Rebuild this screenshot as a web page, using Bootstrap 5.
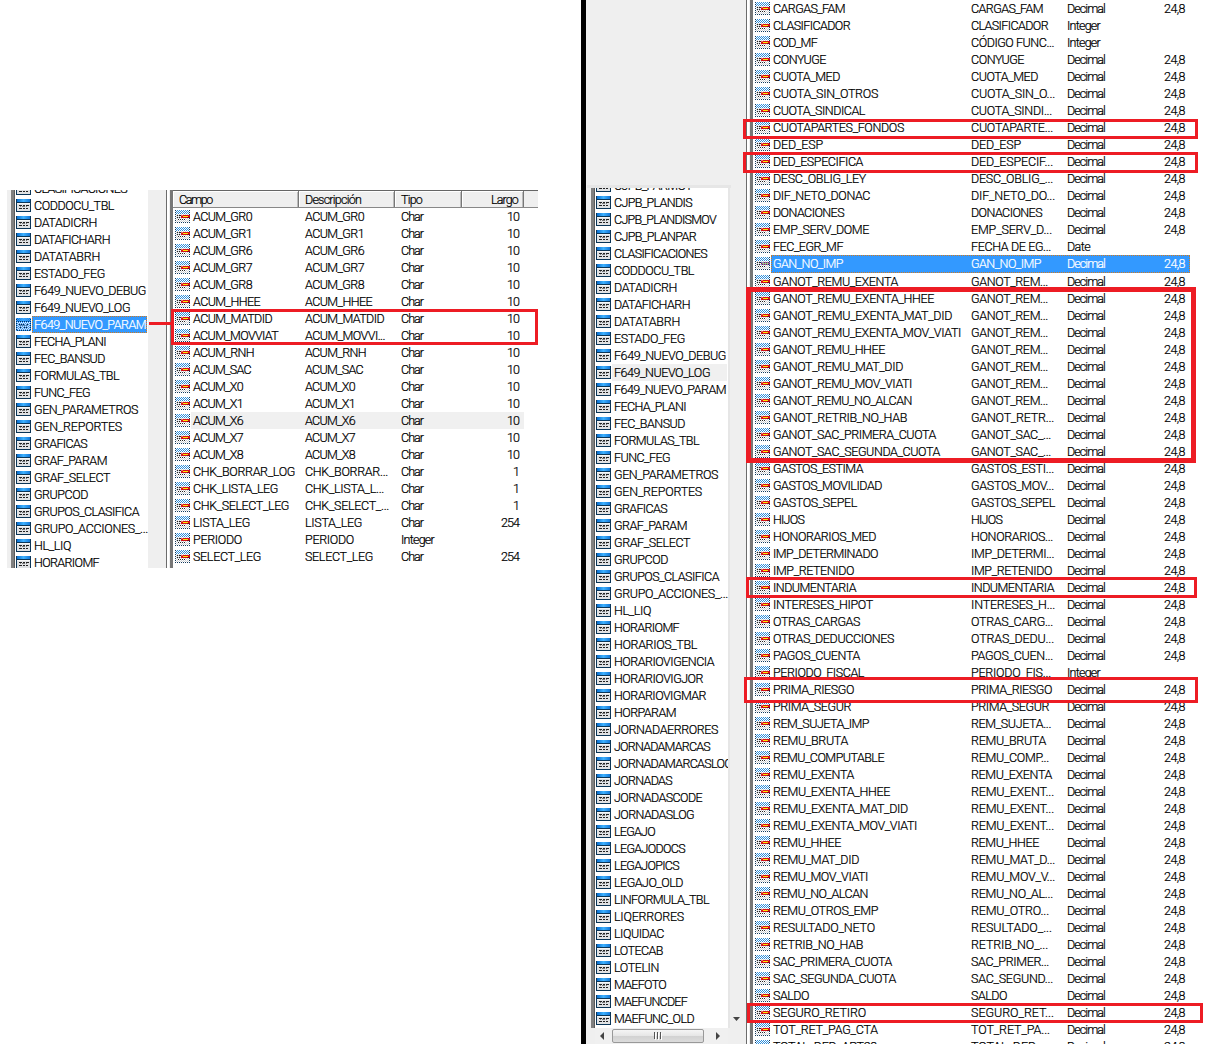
<!DOCTYPE html>
<html lang="es">
<head>
<meta charset="utf-8">
<meta name="viewport" content="width=device-width, initial-scale=1">
<title>Tablas y campos</title>
<link href="https://cdn.jsdelivr.net/npm/bootstrap@5.3.0/dist/css/bootstrap.min.css" rel="stylesheet">
<style>
body{width:1207px;height:1045px;overflow:hidden;background:#fff;color:#000;font-family:Roboto,"Liberation Sans",sans-serif;font-size:12.5px;font-weight:300;line-height:17px;-webkit-text-stroke:.22px currentColor}
.left-shot{width:531px;height:378px;margin:190px 43px 0 7px;background:#efefef}
.right-shot{height:1044px;border-left:5px solid #000;background:#efefef}
.edge{border-left:3px solid #808080;border-right:0;box-shadow:inset 1px 0 #5c5c5c}
.edge-in{border-left:3px solid #777;position:relative}
.tree{background:#fff}
.left-tree{margin-left:4px;width:137px}
.right-side{width:160px;padding-left:1px}
.tree-head{height:185px}
.tree-band{height:3px;width:144px;background:#e6e6e6}
.right-tree{margin-left:4px;width:137px;height:840px}
.up6{margin-top:-10px}
.up2{margin-top:-11px}
.gutter{width:18px}
.split-line{width:4px;border-left:1px solid #6b6b6b;background:linear-gradient(90deg,#fff 2px,#efefef 2px)}
.tree-row{height:17px;padding-left:2px}
.tree-row svg{width:15px;height:13px;margin-top:2px}
.tree-row .lbl{margin-left:1px;padding-left:2px;height:17px}
.tree-row .lbl.hot{background:#f0f0f0;width:115px}
.picked{background:#39f;color:#fff}
.tree-row .lbl.picked{width:115px;outline:1px dotted #d07a20;outline-offset:-1px}
.lbl,.f-desc,.f-type,.f-len{white-space:pre}
.field-list{background:#fff}
.f-row{height:17px;padding-left:2px}
.f-row svg{width:15px;height:13px;margin-top:2px}
.f-cells{margin-left:1px;padding-left:2px;height:17px}
.f-cells.hot{background:#f0f0f0}
.f-cells.picked{height:18px;outline:1px dotted #d07a20;outline-offset:-1px}
.f-row.tall{height:18px}
.narrow .f-cells{width:333px}
.wide .f-cells{width:419px}
.f-desc{width:96px}
.f-type{width:64px}
.f-len{width:54px;text-align:right}
.narrow .f-name{width:112px}
.wide .f-name{width:198px}
.narrow{width:368px;height:378px}
.wide{width:454px;height:1044px}
.col-head{height:18px;background:#efefef;border-top:1px solid #666;border-bottom:1px solid #888}
.col-head div{height:16px;padding:0 5px 0 6px;border-right:1px solid #777;box-shadow:inset 1px 1px #fff,inset -1px 0 #bbb;white-space:pre}
.frame{position:absolute;border:3px solid #ed1c24;pointer-events:none}
.frame.thick{border-width:5px}
.link-line{position:absolute;left:149px;top:322px;width:24px;height:3px;background:#ed1c24}
.hbar{height:16px;background:#f0f0f0;margin-left:8px;width:133px;position:relative}
.thumb{width:92px;height:14px;border:1px solid #999;border-radius:2px;background:linear-gradient(#f5f5f5,#e6e6e6 48%,#d2d2d2 52%,#dcdcdc)}
.vcol{width:15px;background:#efefef;border-left:2px solid #e6e6e6}
</style>
<script src="https://cdn.jsdelivr.net/npm/bootstrap@5.3.0/dist/js/bootstrap.bundle.min.js"></script>
</head>
<body class="d-flex align-items-start position-relative m-0">
<svg width="0" height="0" class="position-absolute">
  <defs>
    <linearGradient id="bar" x1="0" x2="1"><stop offset="0" stop-color="#0b6fd0"/><stop offset=".5" stop-color="#3db1ff"/><stop offset="1" stop-color="#1478d8"/></linearGradient>
    <symbol id="table" viewBox="0 0 15 13"><g shape-rendering="crispEdges">
      <path fill="#0a3557" d="M0 0h15v13H0z"/><path fill="url(#bar)" d="M1 0h13v3H1z"/><path fill="#e0e2e4" d="M1 4h13v8H1z"/><path fill="#f6f6f6" d="M1 4h13v1H1z"/>
      <path fill="#222" d="M3 6h3v1H3zM7 6h2v1H7zM10 6h3v1h-3zM3 9h3v1H3zM7 9h2v1H7zM10 9h2v1h-2z"/><path fill="#777" d="M4 7h1v1H4zM6 7h3v1H6zM10 7h1v1h-1z"/></g></symbol>
    <symbol id="field" viewBox="0 0 15 13"><g shape-rendering="crispEdges" fill="none">
      <path fill="#fff" d="M0 0h15v13H0z"/>
      <path stroke="#2f8fdc" stroke-dasharray="1 1" d="M0 .5h15M1 1.500h14M0 2.500h15M1 3.500h14"/>
      <path stroke="#cdd0d4" stroke-dasharray="1 1" d="M0 4.500h15M1 5.500h14M0 6.500h15M1 7.500h14M0 8.500h15M1 9.500h14M0 10.500h15M1 11.500h14"/>
      <path stroke="#12395c" stroke-dasharray="1 1" d="M.5 0v13M14.500 0v13M0 12.500h15"/>
      <path fill="#222" d="M2 5h1v1H2zM4 5h2v1H4zM2 7h1v1H2zM4 7h1v1H4zM3 9h1v1H3zM5 9h1v1H5zM7 9h1v1H7zM9 9h1v1H9z"/>
      <path fill="#d40f16" d="M6 5h9v3H6z"/><path fill="#f06a60" d="M6 5h2v1H6z"/><path fill="#8e0710" d="M12 7h3v1h-3z"/><path fill="#ffe800" d="M8 6h5v1H8z"/></g></symbol>
    <symbol id="table-on" viewBox="0 0 15 13"><use href="#table"/><path stroke="#39f" stroke-dasharray="1 1" shape-rendering="crispEdges" d="M0 .5h15M1 1.500h14M0 2.500h15M1 3.500h14M0 4.500h15M1 5.500h14M0 6.500h15M1 7.500h14M0 8.500h15M1 9.500h14M0 10.500h15M1 11.500h14M0 12.500h15"/></symbol>
    <symbol id="field-on" viewBox="0 0 15 13"><use href="#field"/><path stroke="#39f" stroke-dasharray="1 1" shape-rendering="crispEdges" d="M6 5.500h9M7 6.500h8M6 7.500h9"/></symbol>
  </defs>
</svg>

<section class="left-shot d-flex overflow-hidden flex-shrink-0">
  <div class="left-tree tree edge overflow-hidden flex-shrink-0"><div id="treeA" class="up6"></div></div>
  <div class="gutter flex-shrink-0"></div>
  <div class="split-line flex-shrink-0"></div>
  <div class="narrow field-list edge-in flex-shrink-0">
    <div class="col-head d-flex"><div style="width:126px">Campo</div><div style="width:96px">Descripción</div><div style="width:67px">Tipo</div><div class="text-end" style="width:62px">Largo</div></div>
    <div id="fieldsA"></div>
  </div>
</section>

<section class="right-shot d-flex overflow-hidden flex-grow-1">
  <div class="right-side flex-shrink-0">
    <div class="tree-head"></div><div class="tree-band"></div>
    <div class="d-flex">
      <div class="right-tree tree edge overflow-hidden flex-shrink-0"><div id="treeB" class="up2"></div></div>
      <div class="vcol d-flex align-items-end justify-content-center"><svg width="8" height="13" class="flex-shrink-0"><path fill="#444" d="M0 2h7L3.500 6z"/></svg></div>
    </div>
    <div class="hbar d-flex align-items-center">
      <svg width="17" height="14"><path fill="#444" d="M9 3v8L5 7z"/></svg>
      <div class="thumb d-flex justify-content-center align-items-center"><svg width="9" height="8"><path stroke="#555" d="M.5 0v7M3.500 0v7M6.500 0v7"/><path stroke="#fff" d="M1.500 1v7M4.500 1v7M7.500 1v7"/></svg></div>
      <svg width="22" height="14"><path fill="#444" d="M12 3v8l4-4z"/></svg>
    </div>
  </div>
  <div class="split-line flex-shrink-0"></div>
  <div class="wide field-list edge-in flex-grow-1"><div id="fieldsB"></div></div>
</section>

<div class="link-line"></div>
<div class="frame" style="left:171px;top:309px;width:367px;height:36px"></div>
<div class="frame" style="left:743px;top:119px;width:455px;height:20px"></div>
<div class="frame" style="left:743px;top:152px;width:455px;height:21px"></div>
<div class="frame thick" style="left:746px;top:287px;width:450px;height:176px"></div>
<div class="frame" style="left:746px;top:577px;width:451px;height:21px"></div>
<div class="frame" style="left:744px;top:677px;width:454px;height:26px"></div>
<div class="frame" style="left:747px;top:1003px;width:456px;height:20px"></div>

<script>
// Advance widths of the list font, in pixels.
const adv = {};
const put = (chars, w) => [...chars].forEach(c => adv[c] = w);
put('ABCEKPSTVXYZ', 7); put('DGHNOQRUÓ', 8); put('FL_0123456789abcdeghknopquvó', 6);
put('Jsxyz', 5); put('M', 9); put('W', 11); put('I., frt', 3); put('ijl', 2); put('m', 8);
const pen = document.createElement('canvas').getContext('2d');
pen.font = '300 12.5px Roboto, "Liberation Sans", sans-serif';
function txt(s) {
  if (!s) return '';
  const want = [...s].reduce((n, c) => n + (adv[c] || 6), 0);
  const gap = (want - pen.measureText(s).width) / s.length;
  return `<span style="letter-spacing:${gap.toFixed(3)}px">${s}</span>`;
}
document.querySelectorAll('.col-head div').forEach(d => d.innerHTML = txt(d.textContent));

function tree(id, names, mark, cls) {
  document.getElementById(id).innerHTML = names.split(' ').map(n => {
    const on = n === mark;
    return `<div class="tree-row d-flex"><svg class="flex-shrink-0"><use href="#table${on && cls === 'picked' ? '-on' : ''}"/></svg><div class="lbl flex-shrink-0 ${on ? cls : ''}">${txt(n)}</div></div>`;
  }).join('');
}
function fields(id, rows, mark, cls) {
  document.getElementById(id).innerHTML = rows.trim().split('\n').map(r => {
    let [n, d, t, l] = r.split('|');
    d = d || n; t = t || 'Decimal'; if (l === undefined) l = '24,8';
    const on = n === mark, pk = on && cls === 'picked';
    return `<div class="f-row d-flex ${pk ? 'tall' : ''}"><svg class="flex-shrink-0"><use href="#field${pk ? '-on' : ''}"/></svg><div class="f-cells d-flex ${on ? cls : ''}"><div class="f-name">${txt(n)}</div><div class="f-desc">${txt(d)}</div><div class="f-type">${txt(t)}</div><div class="f-len">${txt(l)}</div></div></div>`;
  }).join('');
}
tree('treeA', 'CLASIFICACIONES CODDOCU_TBL DATADICRH DATAFICHARH DATATABRH ESTADO_FEG F649_NUEVO_DEBUG F649_NUEVO_LOG F649_NUEVO_PARAM FECHA_PLANI FEC_BANSUD FORMULAS_TBL FUNC_FEG GEN_PARAMETROS GEN_REPORTES GRAFICAS GRAF_PARAM GRAF_SELECT GRUPCOD GRUPOS_CLASIFICA GRUPO_ACCIONES_... HL_LIQ HORARIOMF', 'F649_NUEVO_PARAM', 'picked');
tree('treeB', 'CJPB_PARMOT CJPB_PLANDIS CJPB_PLANDISMOV CJPB_PLANPAR CLASIFICACIONES CODDOCU_TBL DATADICRH DATAFICHARH DATATABRH ESTADO_FEG F649_NUEVO_DEBUG F649_NUEVO_LOG F649_NUEVO_PARAM FECHA_PLANI FEC_BANSUD FORMULAS_TBL FUNC_FEG GEN_PARAMETROS GEN_REPORTES GRAFICAS GRAF_PARAM GRAF_SELECT GRUPCOD GRUPOS_CLASIFICA GRUPO_ACCIONES_... HL_LIQ HORARIOMF HORARIOS_TBL HORARIOVIGENCIA HORARIOVIGJOR HORARIOVIGMAR HORPARAM JORNADAERRORES JORNADAMARCAS JORNADAMARCASLOG JORNADAS JORNADASCODE JORNADASLOG LEGAJO LEGAJODOCS LEGAJOPICS LEGAJO_OLD LINFORMULA_TBL LIQERRORES LIQUIDAC LOTECAB LOTELIN MAEFOTO MAEFUNCDEF MAEFUNC_OLD', 'F649_NUEVO_LOG', 'hot');
fields('fieldsA', `
ACUM_GR0||Char|10
ACUM_GR1||Char|10
ACUM_GR6||Char|10
ACUM_GR7||Char|10
ACUM_GR8||Char|10
ACUM_HHEE||Char|10
ACUM_MATDID||Char|10
ACUM_MOVVIAT|ACUM_MOVVI...|Char|10
ACUM_RNH||Char|10
ACUM_SAC||Char|10
ACUM_X0||Char|10
ACUM_X1||Char|10
ACUM_X6||Char|10
ACUM_X7||Char|10
ACUM_X8||Char|10
CHK_BORRAR_LOG|CHK_BORRAR...|Char|1
CHK_LISTA_LEG|CHK_LISTA_L...|Char|1
CHK_SELECT_LEG|CHK_SELECT_...|Char|1
LISTA_LEG||Char|254
PERIODO||Integer|
SELECT_LEG||Char|254`, 'ACUM_X6', 'hot');
fields('fieldsB', `
CARGAS_FAM
CLASIFICADOR||Integer|
COD_MF|CÓDIGO FUNC...|Integer|
CONYUGE
CUOTA_MED
CUOTA_SIN_OTROS|CUOTA_SIN_O...
CUOTA_SINDICAL|CUOTA_SINDI...
CUOTAPARTES_FONDOS|CUOTAPARTE...
DED_ESP
DED_ESPECIFICA|DED_ESPECIF...
DESC_OBLIG_LEY|DESC_OBLIG_...
DIF_NETO_DONAC|DIF_NETO_DO...
DONACIONES
EMP_SERV_DOME|EMP_SERV_D...
FEC_EGR_MF|FECHA DE EG...|Date|
GAN_NO_IMP
GANOT_REMU_EXENTA|GANOT_REM...
GANOT_REMU_EXENTA_HHEE|GANOT_REM...
GANOT_REMU_EXENTA_MAT_DID|GANOT_REM...
GANOT_REMU_EXENTA_MOV_VIATI|GANOT_REM...
GANOT_REMU_HHEE|GANOT_REM...
GANOT_REMU_MAT_DID|GANOT_REM...
GANOT_REMU_MOV_VIATI|GANOT_REM...
GANOT_REMU_NO_ALCAN|GANOT_REM...
GANOT_RETRIB_NO_HAB|GANOT_RETR...
GANOT_SAC_PRIMERA_CUOTA|GANOT_SAC_...
GANOT_SAC_SEGUNDA_CUOTA|GANOT_SAC_...
GASTOS_ESTIMA|GASTOS_ESTI...
GASTOS_MOVILIDAD|GASTOS_MOV...
GASTOS_SEPEL
HIJOS
HONORARIOS_MED|HONORARIOS...
IMP_DETERMINADO|IMP_DETERMI...
IMP_RETENIDO
INDUMENTARIA
INTERESES_HIPOT|INTERESES_H...
OTRAS_CARGAS|OTRAS_CARG...
OTRAS_DEDUCCIONES|OTRAS_DEDU...
PAGOS_CUENTA|PAGOS_CUEN...
PERIODO_FISCAL|PERIODO_FIS...|Integer|
PRIMA_RIESGO
PRIMA_SEGUR
REM_SUJETA_IMP|REM_SUJETA...
REMU_BRUTA
REMU_COMPUTABLE|REMU_COMP...
REMU_EXENTA
REMU_EXENTA_HHEE|REMU_EXENT...
REMU_EXENTA_MAT_DID|REMU_EXENT...
REMU_EXENTA_MOV_VIATI|REMU_EXENT...
REMU_HHEE
REMU_MAT_DID|REMU_MAT_D...
REMU_MOV_VIATI|REMU_MOV_V...
REMU_NO_ALCAN|REMU_NO_AL...
REMU_OTROS_EMP|REMU_OTRO...
RESULTADO_NETO|RESULTADO_...
RETRIB_NO_HAB|RETRIB_NO_...
SAC_PRIMERA_CUOTA|SAC_PRIMER...
SAC_SEGUNDA_CUOTA|SAC_SEGUND...
SALDO
SEGURO_RETIRO|SEGURO_RET...
TOT_RET_PAG_CTA|TOT_RET_PA...
TOTAL_DED_ART23|TOTAL_DED_...`, 'GAN_NO_IMP', 'picked');
</script>
</body>
</html>
